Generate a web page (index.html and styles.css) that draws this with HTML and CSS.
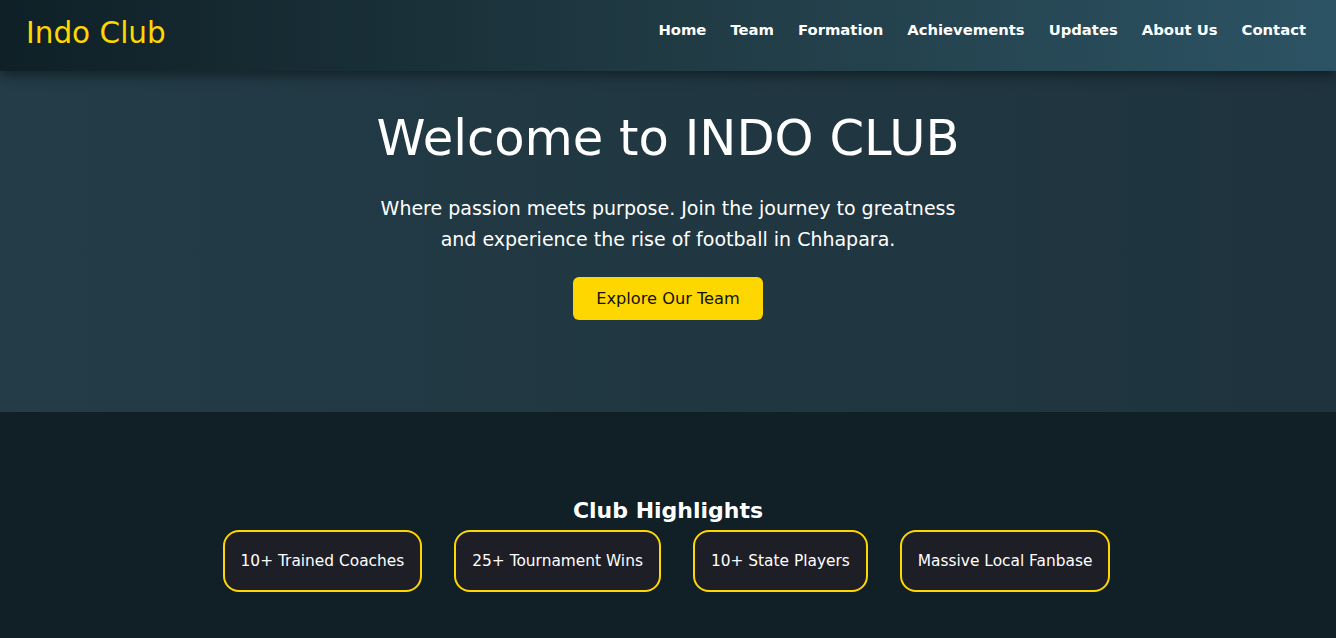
FILE: index.html
```html
<!DOCTYPE html>
<html lang="en">
<head>
<meta charset="utf-8">
<title>Indo Club</title>
<link rel="stylesheet" href="styles.css">
</head>
<body>
<header class="navbar">
  <div class="logo">Indo Club</div>
  <nav class="nav-links">
    <a href="#">Home</a>
    <a href="#">Team</a>
    <a href="#">Formation</a>
    <a href="#">Achievements</a>
    <a href="#">Updates</a>
    <a href="#">About Us</a>
    <a href="#">Contact</a>
  </nav>
</header>
<section class="hero">
  <h1 class="hero-title">Welcome to INDO CLUB</h1>
  <p class="hero-text">Where passion meets purpose. Join the journey to greatness and experience the rise of football in Chhapara.</p>
  <a class="btn" href="#">Explore Our Team</a>
</section>
<section class="highlights">
  <h2 class="section-title">Club Highlights</h2>
  <div class="cards">
    <div class="card">10+ Trained Coaches</div>
    <div class="card">25+ Tournament Wins</div>
    <div class="card">10+ State Players</div>
    <div class="card">Massive Local Fanbase</div>
  </div>
</section>
</body>
</html>
```
FILE: styles.css
```css
* { box-sizing: border-box; }
html, body { margin: 0; padding: 0; }
body {
  font-family: "DejaVu Sans", "Noto Sans", sans-serif;
  background: #111f26;
  color: #fff;
  overflow: hidden;
}
a { text-decoration: none; color: inherit; }

.navbar {
  position: relative;
  z-index: 2;
  height: 71px;
  display: flex;
  align-items: center;
  justify-content: space-between;
  padding: 0 30px 0 26px;
  background: linear-gradient(to right, #0f2027, #203a43, #2c5364);
  box-shadow: 0 4px 12px rgba(0,0,0,0.45);
}
.logo {
  color: #ffd700;
  font-size: 29.5px;
  font-weight: 500;
  margin-top: -5px;
}
.nav-links {
  display: flex;
  gap: 24px;
  margin-top: -12px;
}
.nav-links a {
  color: #fff;
  font-size: 14.8px;
  font-weight: 600;
}

.hero {
  height: 341px;
  padding-top: 38px;
  text-align: center;
  background: linear-gradient(to right, #233c47, #1e333d);
}
.hero-title {
  margin: 0 0 24px;
  font-size: 49.6px;
  font-weight: 500;
  line-height: 1.2;
}
.hero-text {
  max-width: 600px;
  margin: 0 auto 22px;
  font-size: 19px;
  line-height: 31px;
}
.btn {
  display: inline-block;
  padding: 11px 23px;
  background: #ffd700;
  color: #111;
  border-radius: 6px;
  font-size: 16.2px;
  line-height: 21px;
}

.highlights {
  padding: 84px 20px 40px;
  text-align: center;
  background: #111f26;
}
.section-title {
  margin: 0 0 4px;
  font-size: 22px;
  font-weight: 600;
  line-height: 30px;
}
.cards {
  display: flex;
  justify-content: center;
  gap: 32px;
  margin-right: 3px;
}
.card {
  padding: 19px 16px;
  border: 2px solid #ffd700;
  border-radius: 16px;
  background: #1e1e26;
  font-size: 15.4px;
  line-height: 20px;
}
```
